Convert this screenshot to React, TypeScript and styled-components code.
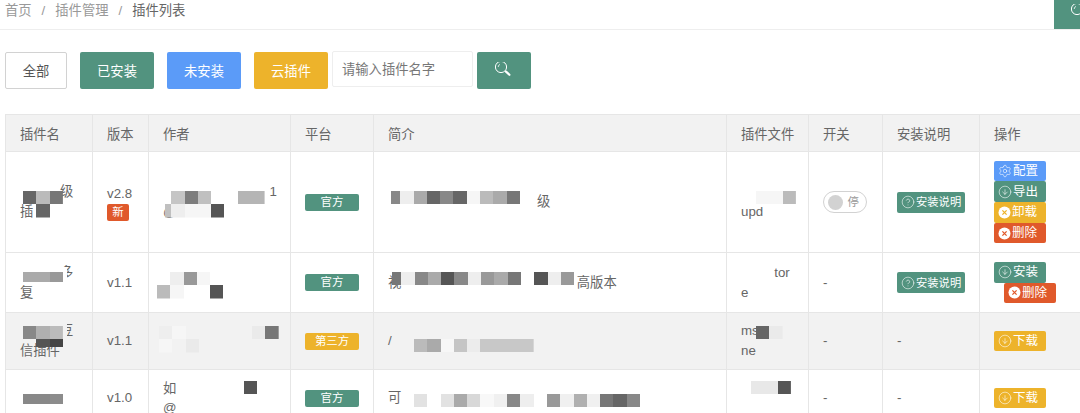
import { CircleArrowDown, CircleHelp, Settings } from 'lucide-react';
import { ReactNode } from 'react';
import styled, { createGlobalStyle } from 'styled-components';

const GREEN = '#52937f';
const BLUE = '#5b9bf8';
const YELLOW = '#edb32b';
const RED = '#e0592b';

const GlobalStyle = createGlobalStyle`
    html, body {
        margin: 0;
        height: 100%;
        overflow: hidden;
        background: #fff;
    }

    body {
        font-family: "Liberation Sans", "Noto Sans CJK SC", sans-serif;
        font-size: 13.3px;
        color: #666;
    }
`;

const TopBar = styled.div`
    height: 29px;
    border-bottom: 1px solid #eee;
    display: flex;
    justify-content: space-between;
    overflow: hidden;
`;

const Breadcrumb = styled.div`
    display: flex;
    gap: 10px;
    padding-left: 5px;
    line-height: 22px;
    color: #999;

    > .current {
        color: #666;
    }
`;

const CornerButton = styled.div`
    width: 26px;
    height: 29px;
    padding: 4px 0 0 17px;
    box-sizing: border-box;
    background: ${GREEN};
    flex-shrink: 0;
`;

const Toolbar = styled.div`
    display: flex;
    align-items: flex-start;
    padding: 22px 0 0 5px;
`;

const FilterButton = styled.button<{ $bg?: string }>`
    width: 74px;
    height: 37px;
    margin-right: 13px;
    padding: 0;
    border: 0;
    border-radius: 2px;
    background: ${(p) => p.$bg};
    color: #fff;
    font: inherit;
`;

const AllButton = styled(FilterButton)`
    width: 62px;
    border: 1px solid #d2d2d2;
    background: #fff;
    color: #555;
`;

const SearchInput = styled.input`
    width: 141px;
    height: 36px;
    margin: -1px 0 0 -9px;
    padding: 0 9px;
    box-sizing: border-box;
    border: 1px solid #eee;
    border-radius: 2px;
    font: inherit;
    outline: none;

    &::placeholder {
        color: #777;
        opacity: 1;
    }
`;

const SearchButton = styled.button`
    width: 54px;
    height: 37px;
    margin-left: 4px;
    padding: 0;
    border: 0;
    border-radius: 2px;
    background: ${GREEN};
    display: flex;
    align-items: center;
    justify-content: center;
`;

const TableWrap = styled.div`
    margin: 25px 0 0 5px;
    overflow: hidden;
`;

const Table = styled.table`
    width: 1084px;
    table-layout: fixed;
    border-collapse: collapse;
`;

const HeadCell = styled.th`
    height: 36px;
    padding: 0 14px;
    border: 1px solid #e6e6e6;
    background: #f2f2f2;
    font-weight: 400;
    text-align: left;
    white-space: nowrap;
`;

const Row = styled.tr<{ $height: number; $striped?: boolean }>`
    height: ${(p) => p.$height}px;
    background: ${(p) => (p.$striped ? '#f2f2f2' : '#fff')};
`;

const Cell = styled.td`
    position: relative;
    padding: 8px 14px;
    border: 1px solid #e6e6e6;
    line-height: 20px;
    vertical-align: middle;
    word-break: break-all;
`;

const NoWrapCell = styled(Cell)`
    white-space: nowrap;
`;

const TightCell = styled(Cell)`
    line-height: 19px;
`;

const MosaicGrid = styled.div<{ $left: number; $top: number; $cols: number; $tileHeight: number; $clip: number }>`
    position: absolute;
    left: ${(p) => p.$left}px;
    top: ${(p) => p.$top}px;
    display: grid;
    grid-template-columns: repeat(${(p) => p.$cols}, 13.3px);
    grid-auto-rows: ${(p) => p.$tileHeight}px;
    clip-path: inset(0 0 0 ${(p) => p.$clip}px);
`;

const Tile = styled.span<{ $color: string }>`
    background: ${(p) => p.$color || 'transparent'};
`;

type MosaicProps = {
    left: number,
    top: number,
    cols: number,
    tiles: string[],
    tileHeight?: number,
    clip?: number
}

// the blurred-out pixel blocks that sit over the redacted text
const Mosaic = ({ left, top, cols, tiles, tileHeight = 13.3, clip = 0 }: MosaicProps) => (
    <MosaicGrid $left={left} $top={top} $cols={cols} $tileHeight={tileHeight} $clip={clip}>
        {tiles.map((color, index) => <Tile key={index} $color={color} />)}
    </MosaicGrid>
);

const NewBadge = styled.div`
    width: 22px;
    height: 17px;
    border-radius: 2px;
    background: ${RED};
    color: #fff;
    font-size: 11.4px;
    line-height: 17px;
    text-align: center;
`;

const PlatformTag = styled.div<{ $bg: string }>`
    width: 54px;
    height: 17px;
    border-radius: 2px;
    background: ${(p) => p.$bg};
    color: #fff;
    font-size: 11.4px;
    line-height: 17px;
    text-align: center;
`;

const GuideTag = styled.div`
    width: 68px;
    height: 21px;
    padding-left: 4px;
    box-sizing: border-box;
    border-radius: 2px;
    background: ${GREEN};
    color: #fff;
    font-size: 11.3px;
    display: flex;
    align-items: center;
    gap: 1px;
`;

const Toggle = styled.div`
    width: 44px;
    height: 22px;
    padding: 0 7px 0 4px;
    box-sizing: border-box;
    border: 1px solid #d2d2d2;
    border-radius: 20px;
    background: #fff;
    color: #999;
    font-size: 11.4px;
    display: flex;
    align-items: center;
    justify-content: space-between;

    > .knob {
        width: 15px;
        height: 15px;
        border-radius: 50%;
        background: #d2d2d2;
    }
`;

const ActionButton = styled.div<{ $bg: string; $indent?: boolean }>`
    width: 52px;
    height: 20.7px;
    margin-left: ${(p) => (p.$indent ? 10 : 0)}px;
    padding-left: 4px;
    box-sizing: border-box;
    border-radius: 2px;
    background: ${(p) => p.$bg};
    color: #fff;
    font-size: 12.5px;
    display: flex;
    align-items: center;
    gap: 1px;
`;

const SearchGlyph = () => (
    <svg width="18" height="18" viewBox="0 0 18 18" fill="none">
        <circle cx="6" cy="5" r="5.6" stroke="#fff" strokeWidth="1" />
        <path d="M3.2 5a2.8 2.8 0 0 1 1.8-2.6" stroke="#fff" strokeWidth="0.8" />
        <path d="M11 9.6l3.4 3.2" stroke="#fff" strokeWidth="2.2" strokeLinecap="round" />
    </svg>
);

const CrossGlyph = ({ color }: { color: string }) => (
    <svg width="13" height="13" viewBox="0 0 13 13">
        <circle cx="6.5" cy="6.5" r="6" fill="#fff" />
        <path d="M4.4 4.4l4.2 4.2M8.6 4.4l-4.2 4.2" stroke={color} strokeWidth="1.3" />
    </svg>
);

const DownIcon = () => <CircleArrowDown size={14} strokeWidth={1} color="#fff" />;

const Guide = () => (
    <GuideTag>
        <CircleHelp size={14} strokeWidth={1} color="#fff" />
        安装说明
    </GuideTag>
);

type ActionProps = { bg: string, icon: ReactNode, label: string, indent?: boolean }

const Action = ({ bg, icon, label, indent }: ActionProps) => (
    <ActionButton $bg={bg} $indent={indent}>
        {icon}
        {label}
    </ActionButton>
);

const columns = [
    { label: '插件名', width: 87 },
    { label: '版本', width: 56 },
    { label: '作者', width: 142 },
    { label: '平台', width: 83 },
    { label: '简介', width: 353 },
    { label: '插件文件', width: 82 },
    { label: '开关', width: 74 },
    { label: '安装说明', width: 97 },
    { label: '操作', width: 110 },
];

const gap = (count: number) => '\u3000'.repeat(count);

const App = () => (
    <>
        <GlobalStyle />
        <TopBar>
            <Breadcrumb>
                <span>首页</span>
                <span>/</span>
                <span>插件管理</span>
                <span>/</span>
                <span className="current">插件列表</span>
            </Breadcrumb>
            <CornerButton>
                <SearchGlyph />
            </CornerButton>
        </TopBar>
        <Toolbar>
            <AllButton>全部</AllButton>
            <FilterButton $bg={GREEN}>已安装</FilterButton>
            <FilterButton $bg={BLUE}>未安装</FilterButton>
            <FilterButton $bg={YELLOW}>云插件</FilterButton>
            <SearchInput placeholder="请输入插件名字" />
            <SearchButton>
                <SearchGlyph />
            </SearchButton>
        </Toolbar>
        <TableWrap>
            <Table>
                <colgroup>
                    {columns.map((column) => <col key={column.label} width={column.width} />)}
                </colgroup>
                <thead>
                    <tr>
                        {columns.map((column) => <HeadCell key={column.label}>{column.label}</HeadCell>)}
                    </tr>
                </thead>
                <tbody>
                    <Row $height={101}>
                        <Cell>
                            {gap(3)}级<br />插
                            <Mosaic left={17} top={39} cols={3} tiles={['#666', '#bbb', '#777', '', '#666', '']} />
                        </Cell>
                        <NoWrapCell>
                            v2.8
                            <NewBadge>新</NewBadge>
                        </NoWrapCell>
                        <NoWrapCell>
                            {gap(8)}1<br />@
                            <Mosaic left={9} top={39} cols={5} clip={7} tiles={['', '#c5c5c5', '#7d7d7d', '#c0c0c0', '', '#c0c0c0', '#eee', '#f6f6f6', '#f6f6f6', '#555']} />
                            <Mosaic left={89} top={39} cols={2} tiles={['#b5b5b5', '#b5b5b5']} />
                        </NoWrapCell>
                        <Cell><PlatformTag $bg={GREEN}>官方</PlatformTag></Cell>
                        <Cell>
                            {gap(11)}&thinsp;级
                            <Mosaic
                                left={13}
                                top={39}
                                cols={11}
                                clip={4}
                                tiles={['#888', '#eee', '#aaa', '#666', '#888', '#666', '#f6f6f6', '#bbb', '#aaa', '#777', '']}
                            />
                        </Cell>
                        <Cell>
                            <br />upd
                            <Mosaic left={29} top={39} cols={3} tiles={['#f6f6f6', '#f6f6f6', '#bbb']} />
                        </Cell>
                        <Cell>
                            <Toggle>
                                <span className="knob" />
                                停
                            </Toggle>
                        </Cell>
                        <Cell><Guide /></Cell>
                        <Cell>
                            <Action bg={BLUE} icon={<Settings size={14} strokeWidth={1} color="#fff" />} label="配置" />
                            <Action bg={GREEN} icon={<DownIcon />} label="导出" />
                            <Action bg={YELLOW} icon={<CrossGlyph color={YELLOW} />} label="卸载" />
                            <Action bg={RED} icon={<CrossGlyph color={RED} />} label="删除" />
                        </Cell>
                    </Row>
                    <Row $height={60}>
                        <Cell>
                            {gap(3)}多<br />复
                            <Mosaic left={48} top={14} cols={1} tileHeight={22} tiles={['#fff']} />
                            <Mosaic left={17} top={19} cols={3} tileHeight={10} tiles={['#aaa', '#aaa', '#999']} />
                        </Cell>
                        <NoWrapCell>v1.1</NoWrapCell>
                        <Cell>
                            <Mosaic left={8} top={19} cols={5} tiles={['', '#eee', '#999', '#f6f6f6', '', '#bbb', '#f6f6f6', '', '', '#555']} />
                        </Cell>
                        <Cell><PlatformTag $bg={GREEN}>官方</PlatformTag></Cell>
                        <Cell>
                            视{gap(13)}&thinsp;高版本
                            <Mosaic
                                left={14}
                                top={19}
                                cols={14}
                                clip={4}
                                tiles={['#777', '#eee', '#888', '#aaa', '#555', '#888', '#eee', '#999', '#aaa', '#777', '', '#555', '#eee', '#999']}
                            />
                        </Cell>
                        <Cell>{gap(2)}&ensp;tor<br />e</Cell>
                        <Cell>-</Cell>
                        <Cell><Guide /></Cell>
                        <Cell>
                            <Action bg={GREEN} icon={<DownIcon />} label="安装" />
                            <Action bg={RED} icon={<CrossGlyph color={RED} />} label="删除" indent />
                        </Cell>
                    </Row>
                    <Row $height={57} $striped>
                        <Cell>
                            {gap(3)}豆<br />信插件
                            <Mosaic left={48} top={9} cols={1} tileHeight={18} tiles={['#f2f2f2']} />
                            <Mosaic left={17} top={13} cols={3} tiles={['#888', '#b0b0b0', '#bbb']} />
                            <Mosaic left={17} top={26} cols={3} tileHeight={8} tiles={['', '#555', '#444']} />
                        </Cell>
                        <NoWrapCell>v1.1</NoWrapCell>
                        <Cell>
                            <Mosaic left={10} top={13} cols={9} tiles={['#eee', '#f6f6f6', '', '', '', '', '', '#eaeaea', '#777', '#f6f6f6', '', '#eaeaea']} />
                        </Cell>
                        <Cell><PlatformTag $bg={YELLOW}>第三方</PlatformTag></Cell>
                        <Cell>
                            /
                            <Mosaic left={40} top={26} cols={9} tiles={['#bbb', '#aaa', '#f7f7f7', '#c5c5c5', '#ececec', '#c8c8c8', '#c8c8c8', '#c8c8c8', '#c8c8c8']} />
                        </Cell>
                        <Cell>
                            ms<br />ne
                            <Mosaic left={29} top={13} cols={2} tiles={['#666', '#eaeaea']} />
                        </Cell>
                        <Cell>-</Cell>
                        <Cell>-</Cell>
                        <Cell><Action bg={YELLOW} icon={<DownIcon />} label="下载" /></Cell>
                    </Row>
                    <Row $height={57}>
                        <Cell>
                            <Mosaic left={17} top={24} cols={3} tileHeight={10} tiles={['#888', '#888', '#8c8c8c']} />
                        </Cell>
                        <NoWrapCell>v1.0</NoWrapCell>
                        <TightCell>
                            如<br />@
                            <Mosaic left={95} top={11} cols={1} tiles={['#555']} />
                        </TightCell>
                        <Cell><PlatformTag $bg={GREEN}>官方</PlatformTag></Cell>
                        <Cell>
                            可
                            <Mosaic
                                left={40}
                                top={24}
                                cols={17}
                                tiles={['#e2e2e2', '', '#e2e2e2', '#aaa', '#d8d8d8', '#f8f8f8', '#f0f0f0', '#888', '#eee', '', '#999', '#f0f0f0', '#b0b0b0', '#f0f0f0', '#777', '#666', '#888']}
                            />
                        </Cell>
                        <Cell>
                            <Mosaic left={24} top={11} cols={3} tiles={['#e8e8e8', '#e8e8e8', '#555']} />
                        </Cell>
                        <Cell>-</Cell>
                        <Cell>-</Cell>
                        <Cell><Action bg={YELLOW} icon={<DownIcon />} label="下载" /></Cell>
                    </Row>
                </tbody>
            </Table>
        </TableWrap>
    </>
);

export default App;
